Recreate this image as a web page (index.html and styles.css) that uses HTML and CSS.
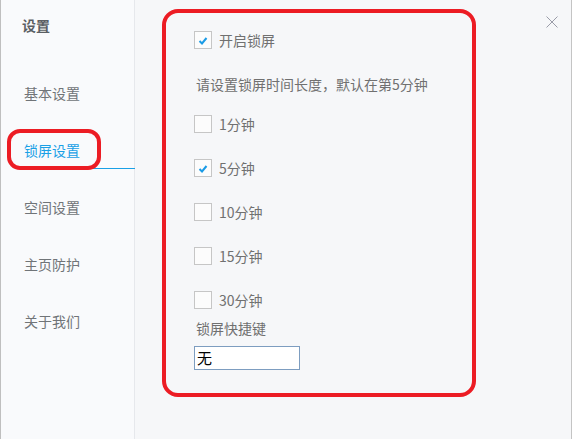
FILE: index.html
```html
<!DOCTYPE html>
<html lang="zh">
<head>
<meta charset="utf-8">
<title>设置</title>
<link rel="stylesheet" href="styles.css">
</head>
<body>
<div class="window">
  <aside class="sidebar">
    <div class="title">设置</div>
    <nav class="nav">
      <div class="nav-item">基本设置</div>
      <div class="nav-item active">锁屏设置<span class="mark"></span></div>
      <div class="nav-item">空间设置</div>
      <div class="nav-item">主页防护</div>
      <div class="nav-item">关于我们</div>
    </nav>
  </aside>
  <main class="main">
    <svg class="close" width="12" height="12" viewBox="0 0 12 12"><path d="M0.5 0.5L11.5 11.5M11.5 0.5L0.5 11.5" stroke="#9a9ca8" stroke-width="1"/></svg>
    <section class="panel">
      <label class="check-row">
        <span class="box"><svg width="16" height="16" viewBox="0 0 16 16"><polyline points="4.5,9 7,11.5 11.5,6" fill="none" stroke="#1a9be6" stroke-width="2"/></svg></span>
        <span class="label">开启锁屏</span>
      </label>
      <p class="hint">请设置锁屏时间长度，默认在第5分钟</p>
      <div class="options">
        <label class="check-row"><span class="box"></span><span class="label">1分钟</span></label>
        <label class="check-row"><span class="box"><svg width="16" height="16" viewBox="0 0 16 16"><polyline points="4.5,9 7,11.5 11.5,6" fill="none" stroke="#1a9be6" stroke-width="2"/></svg></span><span class="label">5分钟</span></label>
        <label class="check-row"><span class="box"></span><span class="label">10分钟</span></label>
        <label class="check-row"><span class="box"></span><span class="label">15分钟</span></label>
        <label class="check-row"><span class="box"></span><span class="label">30分钟</span></label>
      </div>
      <div class="hotkey-label">锁屏快捷键</div>
      <div class="hotkey">无</div>
    </section>
  </main>
</div>
</body>
</html>
```
FILE: styles.css
```css
html, body {
  margin: 0;
  padding: 0;
}
body {
  width: 572px;
  height: 439px;
  overflow: hidden;
  font-family: "Noto Sans CJK SC", "Noto Sans", sans-serif;
  font-size: 14px;
}
.window {
  display: flex;
  height: 439px;
  box-sizing: border-box;
  border-left: 1px solid #bfbfbf;
  border-right: 1px solid #c4c4c4;
}
.sidebar {
  width: 133px;
  flex: none;
  background: #f9fafc;
  border-right: 1px solid #e6e8ec;
  padding-top: 15px;
  box-sizing: content-box;
}
.title {
  margin-left: 21px;
  line-height: 20px;
  height: 20px;
  font-weight: bold;
  color: #5b5f64;
}
.nav {
  display: flex;
  flex-direction: column;
  gap: 20px;
  margin-top: 40px;
}
.nav-item {
  position: relative;
  margin-left: 23px;
  margin-right: -1px;
  height: 36px;
  line-height: 36px;
  color: #707478;
  border-bottom: 1px solid transparent;
}
.nav-item.active {
  color: #1aa0e6;
  border-bottom-color: #1aa0e6;
}
.mark {
  position: absolute;
  left: -17px;
  top: -3px;
  width: 94px;
  height: 41px;
  box-sizing: border-box;
  border: 4px solid #ec1c24;
  border-radius: 13px;
}
.main {
  flex: 1;
  position: relative;
  background: #f6f7f9;
}
.close {
  position: absolute;
  top: 16px;
  right: 13px;
}
.panel {
  margin: 9px 0 0 27px;
  width: 314px;
  height: 388px;
  box-sizing: border-box;
  border: 4px solid #ec1c24;
  border-radius: 16px;
  padding: 18px 0 0 28px;
  color: #707070;
}
.check-row {
  display: flex;
  align-items: center;
  height: 18px;
  gap: 7px;
}
.box {
  width: 18px;
  height: 18px;
  box-sizing: border-box;
  border: 1px solid #c6c6c6;
  background: #fcfcfc;
  display: flex;
  align-items: center;
  justify-content: center;
}
.box svg {
  display: block;
}
.label {
  line-height: 18px;
}
.hint {
  margin: 26px 0 0 2px;
  line-height: 18px;
  height: 18px;
}
.options {
  display: flex;
  flex-direction: column;
  gap: 26px;
  margin-top: 22px;
}
.hotkey-label {
  margin: 10px 0 0 2px;
  line-height: 18px;
  height: 18px;
}
.hotkey {
  margin-top: 9px;
  width: 106px;
  height: 24px;
  box-sizing: border-box;
  border: 1px solid #7d9dc0;
  background: #ffffff;
  color: #000000;
  font-size: 15px;
  line-height: 22px;
  padding-left: 2px;
}
```
